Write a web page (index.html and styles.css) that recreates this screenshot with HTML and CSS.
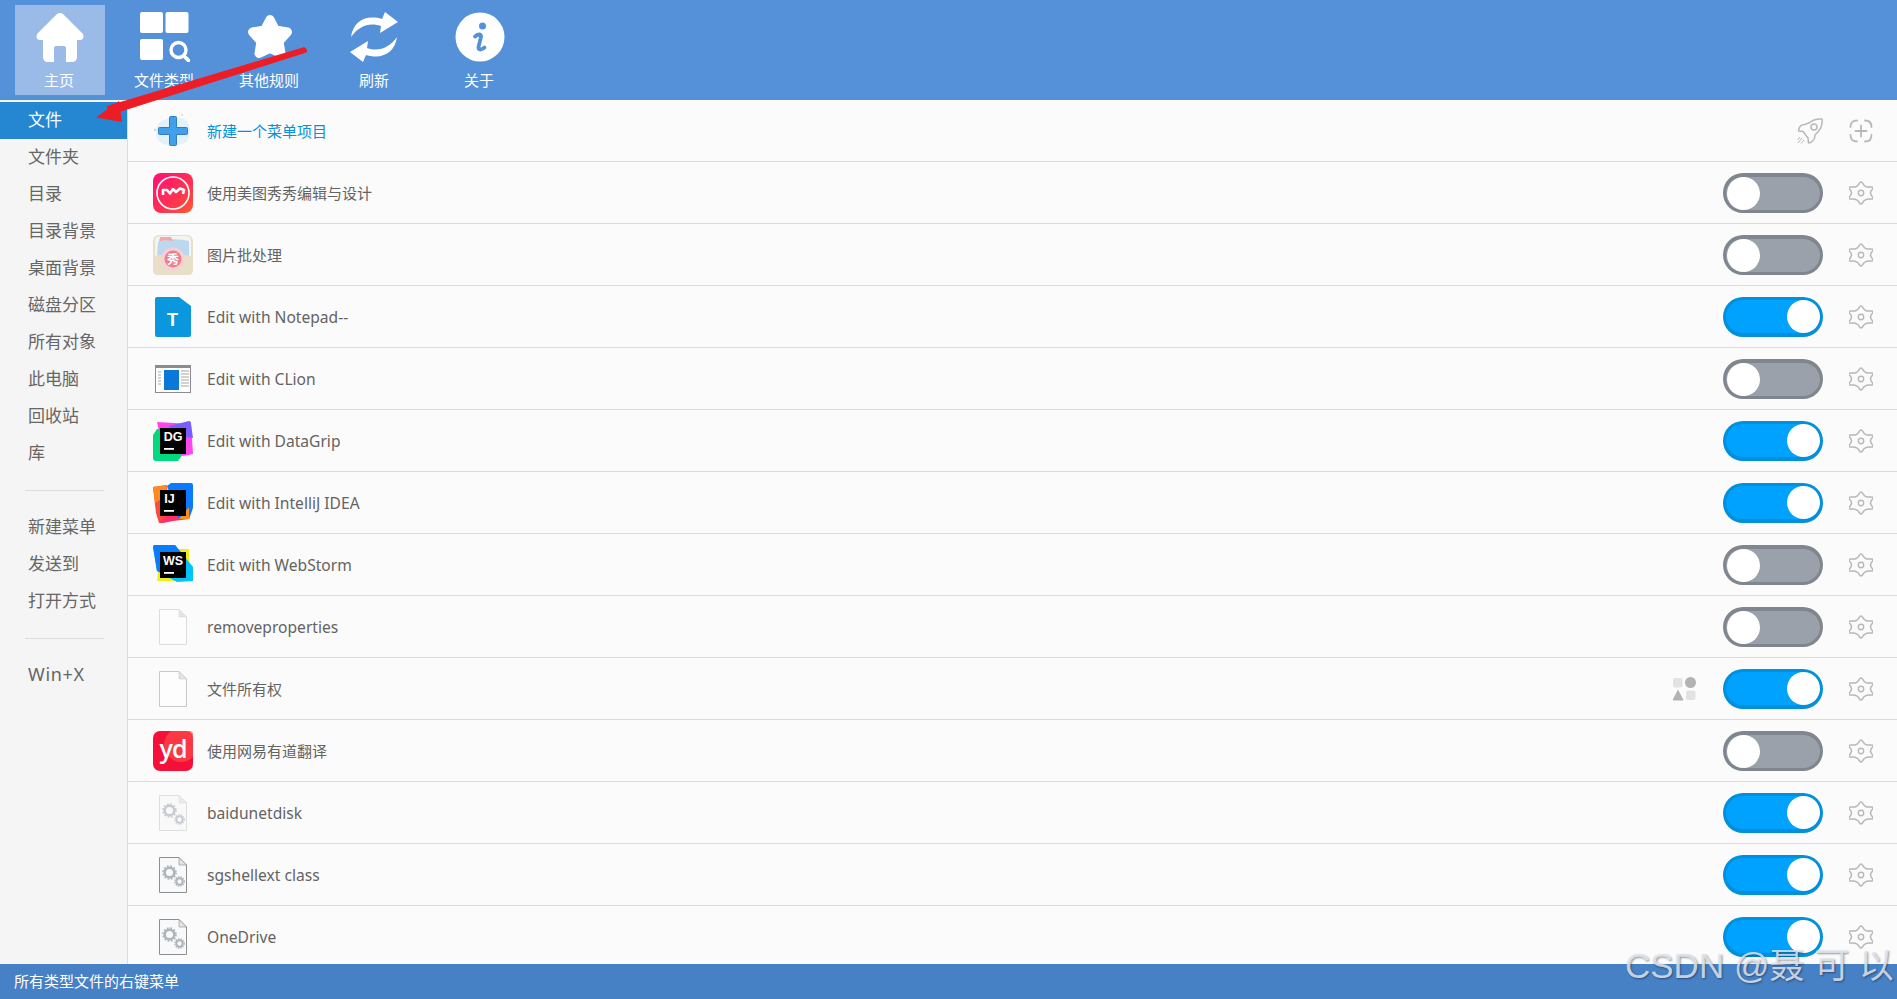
FILE: index.html
```html
<!DOCTYPE html>
<html lang="zh-CN">
<head>
<meta charset="utf-8">
<title>ContextMenuManager</title>
<link rel="stylesheet" href="styles.css">
</head>
<body>
<svg class="defs" width="0" height="0">
  <defs>
    <symbol id="gear" viewBox="-2 -2 28 28">
      <g transform="translate(12 12) scale(1.25 1) translate(-12 -12)">
        <path class="gear-line" vector-effect="non-scaling-stroke" d="M10.13 1.25Q12 -3 13.88 1.25T20.38 5T22.25 8.25T22.25 15.75T20.38 19T13.88 22.75T10.13 22.75T3.63 19T1.75 15.75T1.75 8.25T3.63 5T10.13 1.25Z"/>
      </g>
      <circle class="gear-line" cx="12" cy="12" r="3.200"/>
    </symbol>
    <symbol id="file" viewBox="0 0 28 36">
      <path d="M.5.5H20L27.5 8V35.5H.5Z" fill="#fdfdfd" stroke="currentColor"/>
      <path d="M20 .5V8H27.5Z" fill="#e4e4e4" stroke="currentColor" stroke-width=".6"/>
    </symbol>
    <symbol id="sysfile" viewBox="0 0 28 36">
      <path d="M.5.5H20L27.5 8V35.5H.5Z" fill="#f8f9fa" stroke="currentColor"/>
      <path d="M20 .5V8H27.5Z" fill="#e4e4e4" stroke="currentColor" stroke-width=".6"/>
      <g fill="none" stroke="#aeb4ba">
        <circle cx="10.500" cy="15.500" r="4.800" stroke-width="2.600"/>
        <circle cx="10.500" cy="15.500" r="6.500" stroke-width="1.600" stroke-dasharray="1.800 1.600"/>
        <circle cx="20.500" cy="24.500" r="3.200" stroke-width="2"/>
        <circle cx="20.500" cy="24.500" r="4.700" stroke-width="1.300" stroke-dasharray="1.400 1.100"/>
      </g>
    </symbol>
  </defs>
</svg>

<header class="toolbar">
  <div class="tool tool-active">
    <svg class="tool-icon" viewBox="0 0 50 50"><path d="M25 1C26.500 1 27.500 1.500 29 3L47 21C49.500 23.500 49 28 45 28H42V45C42 48 40 50 37 50H31V36C31 35 30.300 34 29 34H21C19.700 34 19 35 19 36V50H13C10 50 8 48 8 45V28H5C1 28 .5 23.500 3 21L21 3C22.500 1.500 23.500 1 25 1Z" fill="#fff"/></svg>
    <span class="tool-label">主页</span>
  </div>
  <div class="tool">
    <svg class="tool-icon" viewBox="0 0 50 50"><g fill="#fff"><rect x="0" width="23" height="21" rx="2"/><rect x="25.500" width="23" height="21" rx="2"/><rect x="0" y="27" width="23" height="21" rx="2"/></g><circle cx="38.500" cy="38" r="7.500" fill="none" stroke="#fff" stroke-width="3.400"/><path d="M44 44L49.500 49.500" stroke="#fff" stroke-width="3.800" stroke-linecap="round"/></svg>
    <span class="tool-label">文件类型</span>
  </div>
  <div class="tool">
    <svg class="tool-icon" viewBox="0 0 50 50"><path d="M25 7.500L30.500 18L42.500 20L34 29.500L36 41.500L25 36.500L14 41.500L16 29.500L7.500 20L19.500 18Z" fill="#fff" stroke="#fff" stroke-width="9" stroke-linejoin="round"/></svg>
    <span class="tool-label">其他规则</span>
  </div>
  <div class="tool">
    <svg class="tool-icon" viewBox="0 0 50 50"><g fill="#fff"><path d="M1 25C3 10 15 2 32 7L35 0L48 10L30 21L31 14C19 10 9 14 1 25Z"/><path d="M47 25C45 40 33 48 16 43L13 50L0 40L18 29L17 36C29 40 39 36 47 25Z"/></g></svg>
    <span class="tool-label">刷新</span>
  </div>
  <div class="tool">
    <svg class="tool-icon" viewBox="0 0 50 50"><circle cx="25" cy="25" r="24.500" fill="#fff"/><circle cx="27.500" cy="14" r="3.500" fill="#5591d9"/><path d="M20 24.500C23 22 26.500 21.500 26 25L23.500 35C23 38.500 26.500 38 29.500 35.500" fill="none" stroke="#5591d9" stroke-width="3.800" stroke-linecap="round"/></svg>
    <span class="tool-label">关于</span>
  </div>
</header>

<div class="body">
  <nav class="side">
    <div class="side-item side-active">文件</div>
    <div class="side-item">文件夹</div>
    <div class="side-item">目录</div>
    <div class="side-item">目录背景</div>
    <div class="side-item">桌面背景</div>
    <div class="side-item">磁盘分区</div>
    <div class="side-item">所有对象</div>
    <div class="side-item">此电脑</div>
    <div class="side-item">回收站</div>
    <div class="side-item">库</div>
    <div class="side-sep"></div>
    <div class="side-item">新建菜单</div>
    <div class="side-item">发送到</div>
    <div class="side-item">打开方式</div>
    <div class="side-sep"></div>
    <div class="side-item side-latin">Win+X</div>
  </nav>

  <main class="list">
    <div class="row">
      <svg class="icon" viewBox="0 0 40 40">
        <path d="M6 12C12 6 26 4 33 9C38 13 38 26 33 31C26 36 10 36 5 29C2 24 3 15 6 12Z" fill="#e3f1fb"/>
        <circle cx="29" cy="4" r="1" fill="#f0d9a0"/>
        <circle cx="2" cy="19" r="1" fill="#9fd0f2"/>
        <path d="M16.500 6.500Q16.500 5.500 17.500 5.500H22.500Q23.500 5.500 23.500 6.500V16.500H33.500Q34.500 16.500 34.500 17.500V22.500Q34.500 23.500 33.500 23.500H23.500V33.500Q23.500 34.500 22.500 34.500H17.500Q16.500 34.500 16.500 33.500V23.500H6.500Q5.500 23.500 5.500 22.500V17.500Q5.500 16.500 6.500 16.500H16.500Z" fill="#42a0ea" stroke="#2f7dc4"/>
      </svg>
      <span class="row-text row-link">新建一个菜单项目</span>
      <svg class="tool-small ml-auto" viewBox="0 0 26 26" fill="none" stroke="#b8b8b8" stroke-width="1.500" stroke-linejoin="round">
        <path d="M25 1C25 1 17 .5 12 5L7.500 6.500C4.500 6.500 2 9 1.500 13L6 13.500L11 20L11.500 25C15.500 24.500 18 21 18 17C22.500 13 26 8 25 1Z"/>
        <circle cx="17" cy="9" r="3"/>
        <path d="M1 25L5 20M4 25.500L7 22M.5 22L3 19" stroke-width="1"/>
      </svg>
      <svg class="gear" viewBox="0 0 24 24" fill="none" stroke="#b8b8b8" stroke-width="1.800">
        <path d="M1.500 8Q1.500 1.500 8 1.500M16 1.500Q22.500 1.500 22.500 8M22.500 16Q22.500 22.500 16 22.500M8 22.500Q1.500 22.500 1.500 16M12 6.500V17.500M6.500 12H17.500" stroke-linecap="round"/>
      </svg>
    </div>

    <div class="row">
      <svg class="icon" viewBox="0 0 40 40">
        <defs><linearGradient id="mt" x1="0" y1="0" x2="1" y2="1"><stop offset="0" stop-color="#ff0f78"/><stop offset=".6" stop-color="#ff3350"/><stop offset="1" stop-color="#ff5a33"/></linearGradient></defs>
        <rect width="40" height="40" rx="8" fill="url(#mt)"/>
        <circle cx="20" cy="20" r="16" fill="none" stroke="#fff" stroke-width="1.600"/>
        <path d="M10 22V17H14L17 20.500L20 16L23 19L27 15.500L31 17L30 21" fill="none" stroke="#fff" stroke-width="2.600" stroke-linejoin="round"/>
      </svg>
      <span class="row-text">使用美图秀秀编辑与设计</span>
      <div class="switch switch-off"><span class="knob"></span></div>
      <svg class="gear"><use href="#gear"/></svg>
    </div>

    <div class="row">
      <svg class="icon" viewBox="0 0 40 40">
        <rect width="40" height="40" rx="6" fill="#e8dfc8"/>
        <path d="M2 6Q2 1 8 1H32Q38 1 38 6V22H2Z" fill="#f4f4f0"/>
        <path d="M5 7Q20 2 36 6V22H4Z" fill="#bcd8ee"/>
        <path d="M7 2H18L20 6C16 5 10 5 6 7Z" fill="#f3a9a7"/>
        <path d="M0 22C8 18 12 20 20 26C28 20 32 18 40 22V35Q40 40 35 40H5Q0 40 0 35Z" fill="#e8dfc8"/>
        <circle cx="20" cy="24" r="11.500" fill="#f9cfd6"/>
        <circle cx="20" cy="24" r="8.500" fill="#ea7f90"/>
        <text x="20" y="29" class="mini-text" fill="#fff" font-size="12">秀</text>
      </svg>
      <span class="row-text">图片批处理</span>
      <div class="switch switch-off"><span class="knob"></span></div>
      <svg class="gear"><use href="#gear"/></svg>
    </div>

    <div class="row">
      <svg class="icon" viewBox="0 0 40 40">
        <path d="M2 2Q2 0 4 0H26L38 9V38Q38 40 36 40H4Q2 40 2 38Z" fill="#0a97dd"/>
        <text x="19.500" y="29" class="brand-text" fill="#fff" font-size="18">T</text>
      </svg>
      <span class="row-text row-latin">Edit with Notepad--</span>
      <div class="switch switch-on"><span class="knob"></span></div>
      <svg class="gear"><use href="#gear"/></svg>
    </div>

    <div class="row">
      <svg class="icon" viewBox="0 0 40 40">
        <rect x="2.500" y="6.500" width="35" height="27" fill="#fff" stroke="#8c8c8c"/>
        <rect x="2" y="6" width="36" height="3" fill="#8c8c8c"/>
        <rect x="11" y="11" width="15" height="20" fill="#0a78d6"/>
        <path d="M5 13H8M5 16H8M5 19H8M5 22H8M5 25H8M28 12H36M28 15H36M28 18H36M28 21H36M28 24H36M28 27H36" stroke="#a5a5a5"/>
      </svg>
      <span class="row-text row-latin">Edit with CLion</span>
      <div class="switch switch-off"><span class="knob"></span></div>
      <svg class="gear"><use href="#gear"/></svg>
    </div>

    <div class="row">
      <svg class="icon" viewBox="0 0 40 40">
        <path d="M4 8L0 14V37Q0 40 3 40H25L30 33L16 8Z" fill="#00d97e"/>
        <path d="M4 1L38 3L40 33L30 35L8 20Z" fill="#ff45ed"/>
        <path d="M16 5L36 0Q38 0 38 3L40 17L22 14Z" fill="#7b5cff"/>
        <rect x="7" y="7" width="26" height="26" fill="#000"/>
        <text x="20" y="19.500" class="brand-text" fill="#fff" font-size="12.500">DG</text>
        <rect x="11" y="27" width="10" height="1.800" fill="#fff"/>
      </svg>
      <span class="row-text row-latin">Edit with DataGrip</span>
      <div class="switch switch-on"><span class="knob"></span></div>
      <svg class="gear"><use href="#gear"/></svg>
    </div>

    <div class="row">
      <svg class="icon" viewBox="0 0 40 40">
        <path d="M0 4L14 2L16 38L6 40L3 30Z" fill="#fc4a3c"/>
        <path d="M0 4L14 2L12 14L2 20Z" fill="#ff8a1e"/>
        <path d="M6 40L16 30L36 36L20 38L10 40Z" fill="#ff2f66"/>
        <path d="M14 3L18 0H38Q40 0 40 2V25L36 36L26 36Z" fill="#0a7bff"/>
        <path d="M26 36L36 24V36Z" fill="#ff8a1e"/>
        <rect x="7" y="7" width="26" height="26" fill="#000"/>
        <text x="16.500" y="19.500" class="brand-text" fill="#fff" font-size="12.500">IJ</text>
        <rect x="11" y="27" width="10" height="1.800" fill="#fff"/>
      </svg>
      <span class="row-text row-latin">Edit with IntelliJ IDEA</span>
      <div class="switch switch-on"><span class="knob"></span></div>
      <svg class="gear"><use href="#gear"/></svg>
    </div>

    <div class="row">
      <svg class="icon" viewBox="0 0 40 40">
        <path d="M4 36L8 4L36 4L36 22L34 36Z" fill="#f0ed1c"/>
        <path d="M0 2Q0 0 2 0H22L40 22V36L24 37L4 26Z" fill="#00c3f5"/>
        <path d="M0 2Q0 0 2 0H22L30 10L14 30L4 26Z" fill="#087cfa"/>
        <rect x="7" y="7" width="26" height="26" fill="#000"/>
        <text x="20" y="19.500" class="brand-text" fill="#fff" font-size="12.500">WS</text>
        <rect x="11" y="27" width="10" height="1.800" fill="#fff"/>
      </svg>
      <span class="row-text row-latin">Edit with WebStorm</span>
      <div class="switch switch-off"><span class="knob"></span></div>
      <svg class="gear"><use href="#gear"/></svg>
    </div>

    <div class="row">
      <span class="icon-box"><svg class="file file-pale"><use href="#file"/></svg></span>
      <span class="row-text row-latin">removeproperties</span>
      <div class="switch switch-off"><span class="knob"></span></div>
      <svg class="gear"><use href="#gear"/></svg>
    </div>

    <div class="row">
      <span class="icon-box"><svg class="file"><use href="#file"/></svg></span>
      <span class="row-text">文件所有权</span>
      <svg class="group-icon ml-auto" viewBox="0 0 24 24">
        <rect x="0" y="1" width="9.500" height="9.500" rx="2" fill="#e2e2e2"/>
        <circle cx="17.500" cy="5.500" r="5.500" fill="#b2b2b2"/>
        <path d="M5 13.500L10 23H0Z" fill="#b2b2b2" stroke="#b2b2b2" stroke-linejoin="round"/>
        <rect x="13" y="13.500" width="9.500" height="9.500" rx="2" fill="#e2e2e2"/>
      </svg>
      <div class="switch switch-on switch-tight"><span class="knob"></span></div>
      <svg class="gear"><use href="#gear"/></svg>
    </div>

    <div class="row">
      <svg class="icon" viewBox="0 0 40 40">
        <rect width="40" height="40" rx="7" fill="#f5103a"/>
        <circle cx="28" cy="14" r="17" fill="#ff4a4a" opacity=".7"/>
        <text x="20" y="27" class="yd-text" fill="#fff" font-size="25">yd</text>
      </svg>
      <span class="row-text">使用网易有道翻译</span>
      <div class="switch switch-off"><span class="knob"></span></div>
      <svg class="gear"><use href="#gear"/></svg>
    </div>

    <div class="row">
      <span class="icon-box"><svg class="file file-pale pale-all"><use href="#sysfile"/></svg></span>
      <span class="row-text row-latin">baidunetdisk</span>
      <div class="switch switch-on"><span class="knob"></span></div>
      <svg class="gear"><use href="#gear"/></svg>
    </div>

    <div class="row">
      <span class="icon-box"><svg class="file file-dark"><use href="#sysfile"/></svg></span>
      <span class="row-text row-latin">sgshellext class</span>
      <div class="switch switch-on"><span class="knob"></span></div>
      <svg class="gear"><use href="#gear"/></svg>
    </div>

    <div class="row">
      <span class="icon-box"><svg class="file file-dark"><use href="#sysfile"/></svg></span>
      <span class="row-text row-latin">OneDrive</span>
      <div class="switch switch-on"><span class="knob"></span></div>
      <svg class="gear"><use href="#gear"/></svg>
    </div>
  </main>
</div>

<footer class="status">所有类型文件的右键菜单</footer>

<svg class="annotation" viewBox="0 0 320 130" width="320" height="130">
  <path d="M304.500 47.500Q307 49 306.500 52L110 114.500L107 106.500Z" fill="#ee1c25" stroke="#ee1c25" stroke-width="1" stroke-linejoin="round"/>
  <path d="M96 117.500L119 101L122 122Z" fill="#ee1c25"/>
</svg>
<div class="watermark">CSDN @聂 可 以</div>
</body>
</html>
```
FILE: styles.css
```css
* { box-sizing: border-box; }
html, body { margin: 0; height: 100%; }
body {
  position: relative;
  display: flex;
  flex-direction: column;
  height: 999px;
  overflow: hidden;
  font-family: "Noto Sans", "Noto Sans CJK SC", sans-serif;
  color: #666;
  background: #fbfbfb;
}
.defs { position: absolute; }

.toolbar {
  flex: none;
  height: 100px;
  display: flex;
  gap: 15px;
  padding: 5px 0 0 15px;
  background: #5591d9;
}
.tool {
  width: 90px;
  height: 90px;
  padding-top: 7px;
  display: flex;
  flex-direction: column;
  align-items: center;
}
.tool-active { background: #9abbe7; }
.tool-icon { width: 50px; height: 50px; flex: none; }
.tool-label {
  margin-top: 8px;
  margin-right: 2px;
  font-size: 15px;
  line-height: 20px;
  color: #fff;
  white-space: nowrap;
}

.body { flex: 1; min-height: 0; display: flex; }

.side {
  flex: none;
  width: 128px;
  padding-top: 2px;
  background: #f5f5f5;
  border-right: 1px solid #dcdcdc;
}
.side-item {
  height: 37px;
  padding-left: 28px;
  font-size: 17px;
  line-height: 35px;
  color: #666;
}
.side-latin { font-size: 18px; letter-spacing: .7px; }
.side-active { background: #2587d2; color: #fff; }
.side-sep {
  height: 1px;
  margin: 18px 23px 18px 25px;
  background: #dcdcdc;
}

.list { flex: 1; min-width: 0; overflow: hidden; background: #fbfbfb; }
.row {
  height: 62px;
  display: flex;
  align-items: center;
  padding: 0 24px 0 25px;
  border-bottom: 1px solid #dcdcdc;
}
.icon, .icon-box {
  flex: none;
  width: 40px;
  height: 40px;
  margin-right: 14px;
}
.icon-box { display: flex; align-items: center; justify-content: center; }
.row-text { font-size: 15px; line-height: 20px; color: #636363; white-space: nowrap; }
.row-latin { font-size: 15.600px; }
.row-link { color: #0a8fdc; }
.ml-auto { margin-left: auto; }

.tool-small { flex: none; width: 26px; height: 26px; margin-right: 26px; }
.gear { flex: none; width: 24px; height: 24px; }
.gear-line { fill: none; stroke: #b8b8b8; stroke-width: 1.500; }
.group-icon { flex: none; width: 24px; height: 24px; margin-right: 26px; }

.switch {
  flex: none;
  display: flex;
  align-items: center;
  width: 100px;
  height: 40px;
  margin-left: auto;
  margin-right: 26px;
  border: 3px solid;
  border-radius: 20px;
}
.switch-tight { margin-left: 0; }
.switch-off {
  justify-content: flex-start;
  padding-left: 1px;
  background: #9aa1aa;
  border-color: #7f868e;
  border-top-width: 4px;
}
.switch-on {
  justify-content: flex-end;
  background: #00a2ff;
  border-color: #0090dc;
  border-bottom-width: 4px;
}
.knob { width: 33px; height: 33px; border-radius: 50%; background: #fff; }

.file { width: 28px; height: 36px; color: #c9c9c9; }
.file-pale { color: #dcdcdc; }
.file-dark { color: #8f8f8f; }
.pale-all { color: #cfcfcf; opacity: .65; }

.mini-text, .brand-text, .yd-text { text-anchor: middle; }
.mini-text { font-family: "Noto Sans CJK SC", sans-serif; font-weight: 700; }
.brand-text { font-family: "Liberation Sans", sans-serif; font-weight: 700; }
.yd-text { font-family: "Open Sans", sans-serif; font-weight: 600; letter-spacing: -1px; }

.status {
  flex: none;
  height: 35px;
  padding-left: 14px;
  font-size: 15px;
  line-height: 35px;
  color: #fff;
  background: #4680c5;
  position: relative;
}

.annotation { position: absolute; left: 0; top: 0; pointer-events: none; }
.watermark {
  position: absolute;
  left: 1625px;
  top: 944px;
  font-family: "Liberation Sans", "Noto Sans CJK SC", sans-serif;
  font-size: 35px;
  line-height: 44px;
  white-space: nowrap;
  color: rgba(225, 230, 240, .85);
  text-shadow: 1px 1px 2px rgba(0, 0, 0, .4);
}
```
